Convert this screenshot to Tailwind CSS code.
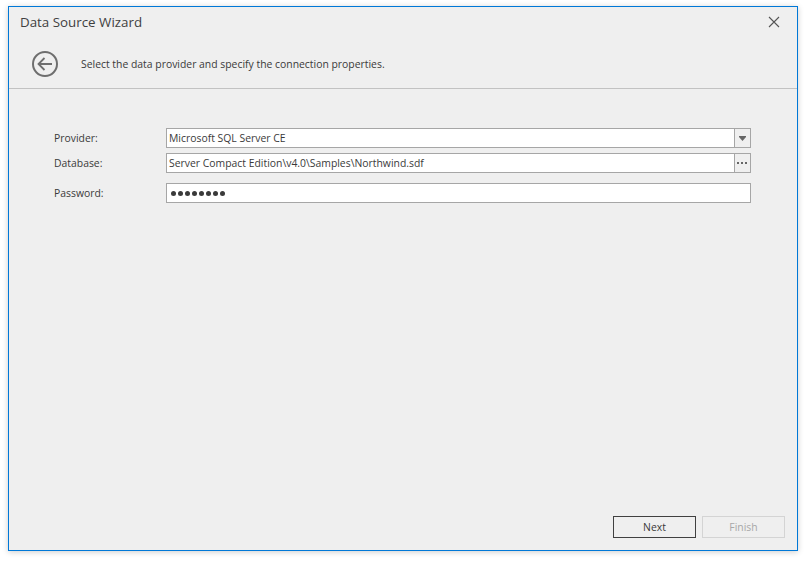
<!DOCTYPE html>
<html lang="en">
<head>
<meta charset="UTF-8">
<title>Data Source Wizard</title>
<script src="https://cdn.jsdelivr.net/npm/@tailwindcss/browser@4"></script>
</head>
<body class="bg-white w-[806px] h-[561px] overflow-hidden font-['Open_Sans','Noto_Sans',sans-serif] text-[10.4px] text-[#3a3a3a]">
  <div class="ml-[8px] mt-[6px] w-[790px] h-[545px] bg-[#efefef] border border-[#0078d7] shadow-[0_1px_6px_rgba(0,0,0,0.2)] flex flex-col">
    <!-- title bar -->
    <div class="h-[31px] flex items-center justify-between pl-[11px] pr-[17px] pb-[1px]">
      <span class="text-[13.35px] leading-[20px] text-[#404040]">Data Source Wizard</span>
      <svg width="12" height="12" viewBox="0 0 12 12" fill="none" stroke="#555" stroke-width="1.1"><path d="M1 1l10 10M11 1L1 11"/></svg>
    </div>
    <!-- header -->
    <div class="h-[51px] flex items-center pl-[22px] border-b border-[#c2c2c2] pt-[2px]">
      <svg width="28" height="28" viewBox="0 0 28 28" fill="none" stroke="#6e6e6e" stroke-width="2"><circle cx="14" cy="14" r="12"/><path d="M21 14H8M13.5 8l-6 6 6 6" stroke-width="1.8"/></svg>
      <span class="ml-[22px] leading-[16px]">Select the data provider and specify the connection properties.</span>
    </div>
    <!-- form -->
    <div class="flex-1 pt-[39px] pl-[45px] flex flex-col">
      <div class="flex items-center h-[20px]">
        <label class="w-[112px] pt-[2px]">Provider:</label>
        <div class="w-[585px] h-[20px] flex border border-[#a6a6a6] bg-white">
          <span class="flex-1 pl-[2px] leading-[18px]">Microsoft SQL Server CE</span>
          <span class="w-[16px] bg-[#efefef] border-l border-[#a6a6a6] flex items-center justify-center">
            <svg width="7" height="5" viewBox="0 0 7 5" fill="#666"><path d="M0 0h7v1L3.5 5 0 1z"/></svg>
          </span>
        </div>
      </div>
      <div class="flex items-center h-[20px] mt-[5px]">
        <label class="w-[112px] pt-[2px]">Database:</label>
        <div class="w-[585px] h-[20px] flex border border-[#a6a6a6] bg-white">
          <span class="flex-1 pl-[2px] leading-[18px]">Server Compact Edition\v4.0\Samples\Northwind.sdf</span>
          <span class="w-[16px] bg-[#efefef] border-l border-[#a6a6a6] flex items-center justify-center">
            <svg width="11" height="2" viewBox="0 0 11 2" fill="#666"><path d="M0 0h2v2H0zM4 0h2v2H4zM8 0h2v2H8z"/></svg>
          </span>
        </div>
      </div>
      <div class="flex items-center h-[20px] mt-[10px]">
        <label class="w-[112px] pt-[2px]">Password:</label>
        <div class="w-[585px] h-[20px] flex items-center gap-[2px] border border-[#a6a6a6] bg-white pl-[4px]">
          <i class="size-[5px] rounded-full bg-[#3a3a3a]"></i><i class="size-[5px] rounded-full bg-[#3a3a3a]"></i><i class="size-[5px] rounded-full bg-[#3a3a3a]"></i><i class="size-[5px] rounded-full bg-[#3a3a3a]"></i><i class="size-[5px] rounded-full bg-[#3a3a3a]"></i><i class="size-[5px] rounded-full bg-[#3a3a3a]"></i><i class="size-[5px] rounded-full bg-[#3a3a3a]"></i><i class="size-[5px] rounded-full bg-[#3a3a3a]"></i>
        </div>
      </div>
    </div>
    <!-- footer -->
    <div class="flex justify-end gap-[6px] pr-[12px] pb-[12px]">
      <button class="w-[83px] h-[22px] border border-[#404040] text-[#3a3a3a] leading-[20px]">Next</button>
      <button class="w-[83px] h-[22px] border border-[#d4d4d4] text-[#a8a8a8] leading-[20px]">Finish</button>
    </div>
  </div>
</body>
</html>
